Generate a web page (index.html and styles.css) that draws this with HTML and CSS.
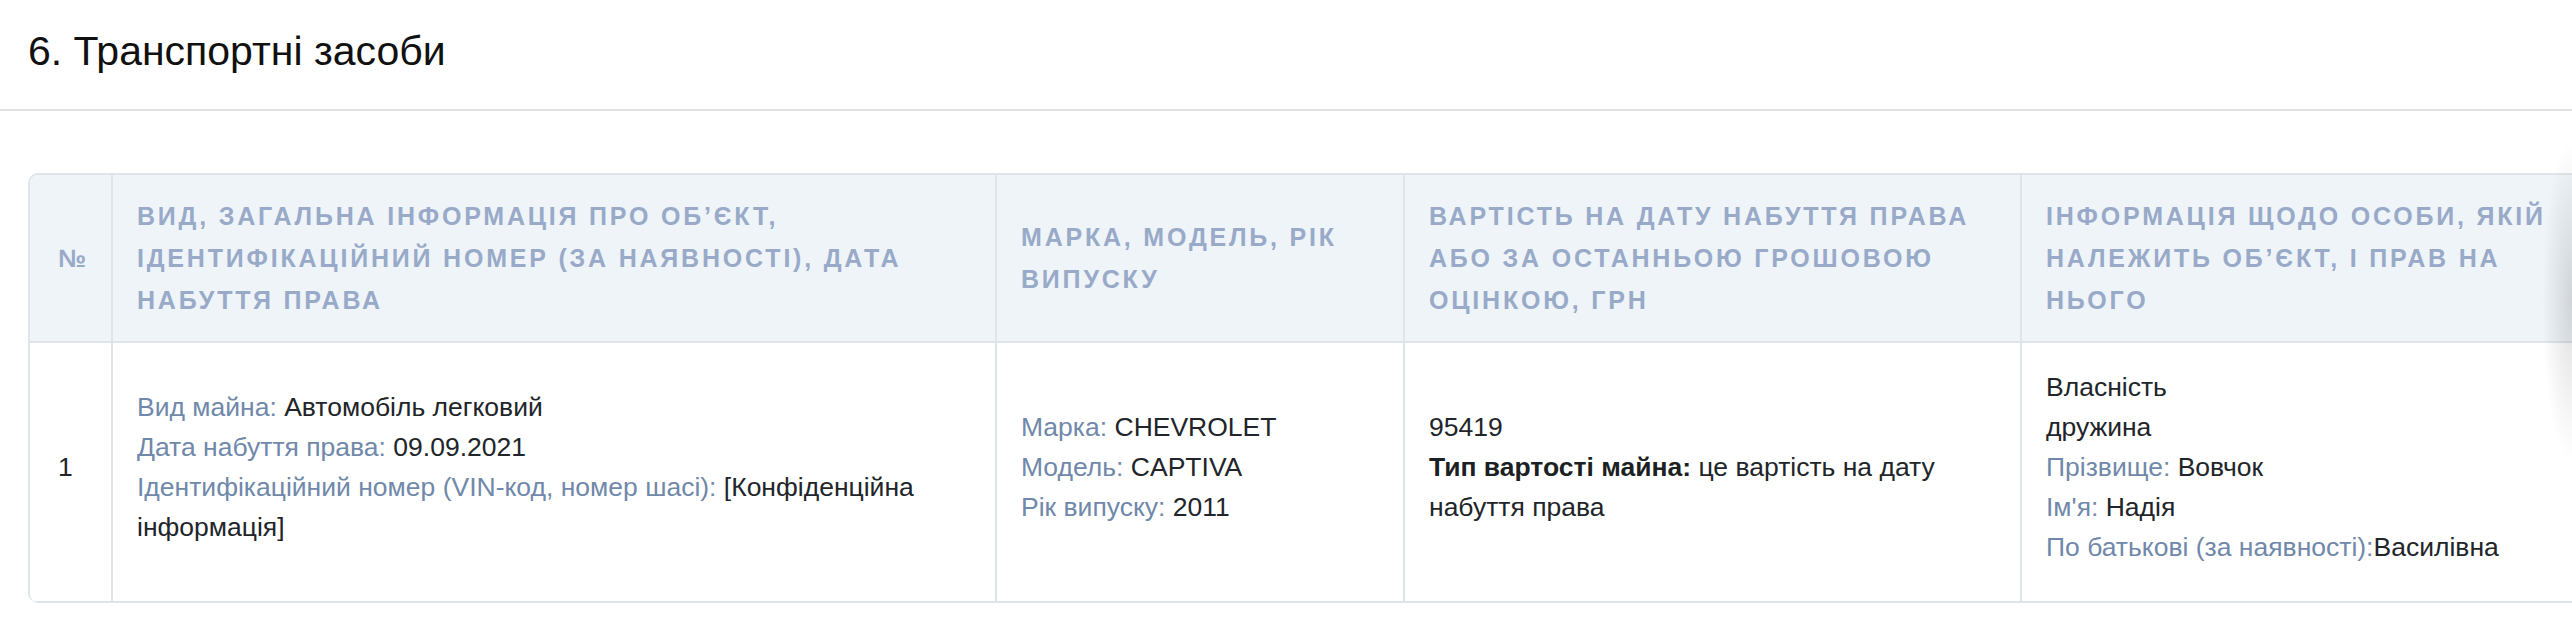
FILE: index.html
```html
<!DOCTYPE html>
<html lang="uk">
<head>
<meta charset="utf-8">
<title>6. Транспортні засоби</title>
<link rel="stylesheet" href="styles.css">
</head>
<body>
<div class="page">
  <h2 class="section-title">6. Транспортні засоби</h2>
  <div class="section-body">
    <div class="scroller">
      <div class="tbl">
        <div class="th c1">№</div>
        <div class="th">Вид, загальна інформація про об’єкт, ідентифікаційний номер (за наявності), дата набуття права</div>
        <div class="th">Марка, модель, рік випуску</div>
        <div class="th">Вартість на дату набуття права або за останньою грошовою оцінкою, грн</div>
        <div class="th c5">Інформація щодо особи, якій належить об’єкт, і прав на нього</div>

        <div class="td c1">1</div>
        <div class="td">
          <div><span class="lbl">Вид майна:</span> Автомобіль легковий</div>
          <div><span class="lbl">Дата набуття права:</span> 09.09.2021</div>
          <div><span class="lbl">Ідентифікаційний номер (VIN-код, номер шасі):</span> [Конфіденційна інформація]</div>
        </div>
        <div class="td">
          <div><span class="lbl">Марка:</span> CHEVROLET</div>
          <div><span class="lbl">Модель:</span> CAPTIVA</div>
          <div><span class="lbl">Рік випуску:</span> 2011</div>
        </div>
        <div class="td">
          <div>95419</div>
          <div><b>Тип вартості майна:</b> це вартість на дату набуття права</div>
        </div>
        <div class="td c5">
          <div>Власність</div>
          <div>дружина</div>
          <div><span class="lbl">Прізвище:</span> Вовчок</div>
          <div><span class="lbl">Ім'я:</span> Надія</div>
          <div><span class="lbl">По батькові (за наявності):</span>Василівна</div>
        </div>
      </div>
    </div>
    <div class="scroll-shadow"></div>
  </div>
</div>
</body>
</html>
```

FILE: styles.css
```css
html, body {
  margin: 0;
  padding: 0;
  background: #ffffff;
}

body {
  font-family: "Liberation Sans", Arial, Helvetica, sans-serif;
  color: #212529;
  overflow: hidden;
}

.section-title {
  margin: 0;
  padding: 27px 28px 34px;
  font-size: 41px;
  line-height: 48px;
  font-weight: 400;
  color: #111111;
  border-bottom: 2px solid #e1e1e1;
}

.section-body {
  position: relative;
  padding: 62px 0 0 28px;
}

.scroller {
  overflow: hidden;
}

.tbl {
  display: grid;
  grid-template-columns: 83px 884px 408px 617px 640px;
  width: max-content;
  border-top: 2px solid #dfe4ea;
  border-left: 2px solid #dfe4ea;
  border-radius: 10px 0 0 10px;
  overflow: hidden;
}

.th,
.td {
  box-sizing: border-box;
  display: flex;
  flex-direction: column;
  justify-content: center;
  border-right: 2px solid #dfe4ea;
  border-bottom: 2px solid #dfe4ea;
  padding-left: 24px;
  padding-right: 24px;
}

.th {
  background: #eff4f9;
  color: #98aac8;
  font-size: 25px;
  line-height: 42px;
  font-weight: 700;
  text-transform: uppercase;
  letter-spacing: 2.8px;
  padding-top: 20px;
  padding-bottom: 20px;
}

.td {
  background: #ffffff;
  font-size: 26.5px;
  line-height: 40px;
  padding-top: 24px;
  padding-bottom: 34px;
}

.c1 {
  padding-left: 28px;
  padding-right: 4px;
}

.c5 {
  padding-right: 74px;
}

.lbl {
  color: #7088aa;
}

.td b {
  font-weight: 700;
  color: #1c1f23;
}

.scroll-shadow {
  position: absolute;
  right: 0;
  top: 30px;
  width: 30px;
  height: 320px;
  background: radial-gradient(farthest-side at 100% 50%, rgba(0, 0, 0, 0.13), rgba(0, 0, 0, 0));
  pointer-events: none;
}
```
